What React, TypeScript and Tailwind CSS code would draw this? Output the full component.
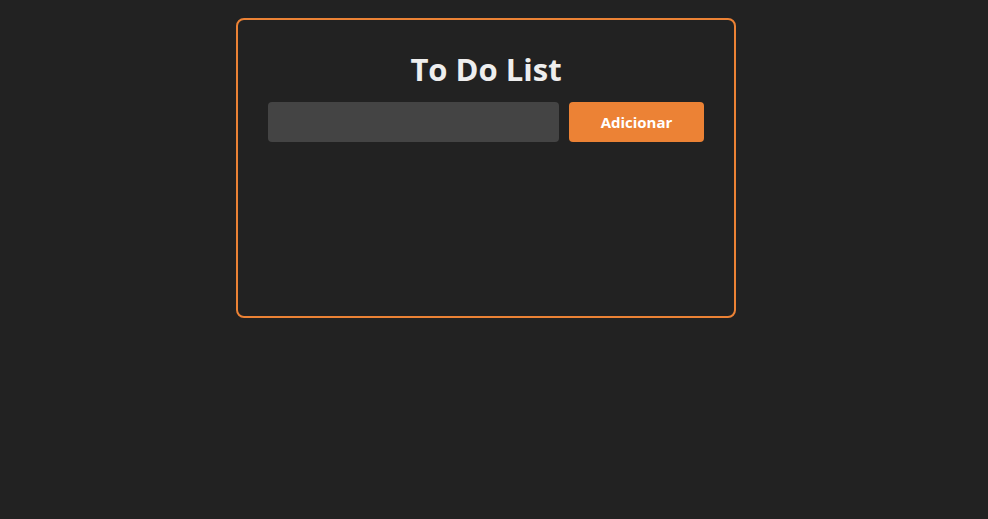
import React, { useState } from "react";

const App: React.FC = () => {
  const [task, setTask] = useState("");

  return (
    <div className="min-h-screen bg-[#222222] pr-[16px] pt-[18px] font-['Open_Sans',sans-serif]">
      <div className="mx-auto w-[500px] h-[300px] border-2 border-[#ec8235] rounded-lg px-[30px] pt-[30px]">
        <h1 className="text-[31px] leading-[38px] font-bold text-[#eeeeee] text-center mb-[14px]">
          To Do List
        </h1>

        <div className="flex gap-[10px]">
          <input
            value={task}
            onChange={(e) => setTask(e.target.value)}
            className="flex-1 h-10 bg-[#444444] rounded px-3 text-white outline-none"
          />
          <button className="w-[135px] h-10 bg-[#ec8235] rounded text-white font-bold text-[15px]">
            Adicionar
          </button>
        </div>
      </div>
    </div>
  );
};

export default App;
